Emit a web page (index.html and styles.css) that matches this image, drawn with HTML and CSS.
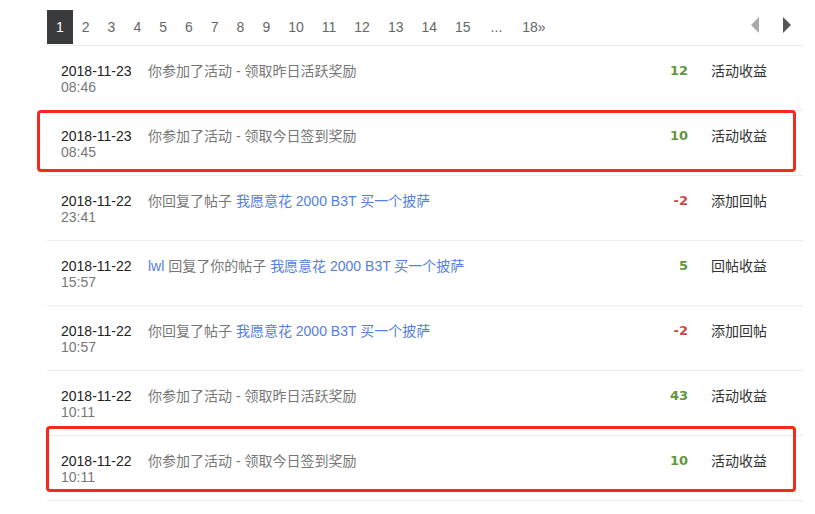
FILE: index.html
```html
<!DOCTYPE html>
<html lang="zh-CN">
<head>
    <meta charset="UTF-8">
    <title>积分记录</title>
    <link rel="stylesheet" href="styles.css">
</head>
<body>
    <div class="wrap">
        <div class="pager">
            <a class="page current">1</a>
            <a class="page">2</a>
            <a class="page">3</a>
            <a class="page">4</a>
            <a class="page">5</a>
            <a class="page">6</a>
            <a class="page">7</a>
            <a class="page">8</a>
            <a class="page">9</a>
            <a class="page">10</a>
            <a class="page">11</a>
            <a class="page">12</a>
            <a class="page">13</a>
            <a class="page">14</a>
            <a class="page">15</a>
            <span class="page dots">...</span>
            <a class="page">18»</a>
            <div class="arrows">
                <a class="arrow prev"></a>
                <a class="arrow next"></a>
            </div>
        </div>

        <div class="log">
            <div class="row">
                <div class="when">2018-11-23<span class="time">08:46</span></div>
                <div class="desc">你参加了活动 - 领取昨日活跃奖励</div>
                <div class="pts plus">12</div>
                <div class="kind">活动收益</div>
            </div>
            <div class="row">
                <div class="when">2018-11-23<span class="time">08:45</span></div>
                <div class="desc">你参加了活动 - 领取今日签到奖励</div>
                <div class="pts plus">10</div>
                <div class="kind">活动收益</div>
            </div>
            <div class="row">
                <div class="when">2018-11-22<span class="time">23:41</span></div>
                <div class="desc">你回复了帖子 <a>我愿意花 2000 B3T 买一个披萨</a></div>
                <div class="pts minus">-2</div>
                <div class="kind">添加回帖</div>
            </div>
            <div class="row">
                <div class="when">2018-11-22<span class="time">15:57</span></div>
                <div class="desc"><a>lwl</a> 回复了你的帖子 <a>我愿意花 2000 B3T 买一个披萨</a></div>
                <div class="pts plus">5</div>
                <div class="kind">回帖收益</div>
            </div>
            <div class="row">
                <div class="when">2018-11-22<span class="time">10:57</span></div>
                <div class="desc">你回复了帖子 <a>我愿意花 2000 B3T 买一个披萨</a></div>
                <div class="pts minus">-2</div>
                <div class="kind">添加回帖</div>
            </div>
            <div class="row">
                <div class="when">2018-11-22<span class="time">10:11</span></div>
                <div class="desc">你参加了活动 - 领取昨日活跃奖励</div>
                <div class="pts plus">43</div>
                <div class="kind">活动收益</div>
            </div>
            <div class="row">
                <div class="when">2018-11-22<span class="time">10:11</span></div>
                <div class="desc">你参加了活动 - 领取今日签到奖励</div>
                <div class="pts plus">10</div>
                <div class="kind">活动收益</div>
            </div>

            <!-- annotations -->
            <div class="mark mark-one"></div>
            <div class="mark mark-two"></div>
        </div>
    </div>
</body>
</html>
```

FILE: styles.css
```css
* {
    margin: 0;
    padding: 0;
    box-sizing: border-box;
}

body {
    font-family: 'Liberation Sans', Arial, 'Noto Sans CJK SC', sans-serif;
    font-size: 14px;
    color: #333;
    background: #fff;
}

.wrap {
    margin: 10px 12px 0 47px;
}

/* Pagination */
.pager {
    display: flex;
    align-items: center;
    height: 36px;
    border-bottom: 1px solid #ebebeb;
    padding-bottom: 2px;
}

.page {
    display: block;
    padding: 0 9px;
    line-height: 34px;
    height: 34px;
    color: #666;
    cursor: pointer;
}

.page.current {
    background: #3a3b3d;
    color: #fff;
}

.page.dots {
    padding: 0 11px;
}

.arrows {
    margin-left: auto;
    display: flex;
    padding-bottom: 4px;
}

.arrow {
    width: 32px;
    height: 16px;
    display: flex;
    justify-content: center;
    align-items: center;
}

.arrow::before {
    content: "";
    width: 0;
    height: 0;
    border-top: 8px solid transparent;
    border-bottom: 8px solid transparent;
}

.arrow.prev::before {
    border-right: 8px solid #a9a9a9;
}

.arrow.next::before {
    border-left: 8px solid #555;
}

/* Records */
.log {
    position: relative;
}

.row {
    display: grid;
    grid-template-columns: 87px 1fr 60px 92px;
    padding: 17px 0 15px 14px;
    border-bottom: 1px solid #ededed;
    line-height: 16px;
}

.when {
    color: #222;
}

.time {
    display: block;
    color: #777;
}

.desc {
    color: #777;
    white-space: nowrap;
}

.desc a {
    color: #5580dd;
    cursor: pointer;
}

.pts {
    font-family: 'DejaVu Sans', sans-serif;
    font-weight: bold;
    font-size: 13px;
    text-align: right;
    padding-right: 23px;
}

.pts.plus {
    color: #62963a;
}

.pts.minus {
    color: #d2463f;
}

.kind {
    color: #333;
}

.mark {
    position: absolute;
    border: 3px solid #f5291c;
    border-radius: 4px;
    pointer-events: none;
}

.mark-one {
    top: 64px;
    left: -10px;
    width: 759px;
    height: 62px;
}

.mark-two {
    top: 380px;
    left: -1px;
    width: 750px;
    height: 66px;
}
```
